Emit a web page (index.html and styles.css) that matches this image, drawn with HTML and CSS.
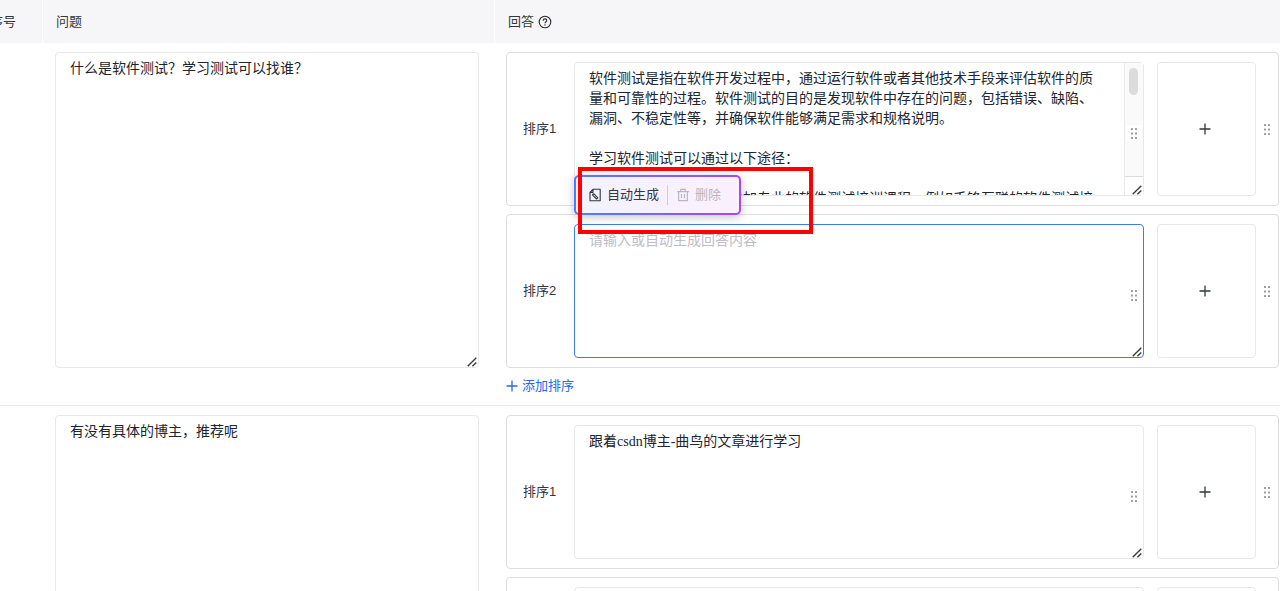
FILE: index.html
```html
<!DOCTYPE html>
<html lang="zh-CN">
<head>
<meta charset="utf-8">
<title>问答标注</title>
<link rel="stylesheet" href="styles.css">
</head>
<body>
<svg class="sprite" aria-hidden="true">
  <symbol id="dots" viewBox="0 0 9 13"><g fill="#999"><rect x="1" y="1" width="2" height="2" rx=".5"/><rect x="5" y="1" width="2" height="2" rx=".5"/><rect x="1" y="5.5" width="2" height="2" rx=".5"/><rect x="5" y="5.5" width="2" height="2" rx=".5"/><rect x="1" y="10" width="2" height="2" rx=".5"/><rect x="5" y="10" width="2" height="2" rx=".5"/></g></symbol>
  <symbol id="grip" viewBox="0 0 10 10"><path d="M.7 9.3 9.3.7M5.4 9.3 9.3 5.4" stroke="#3c3c3c" stroke-width="1.4" fill="none"/></symbol>
  <symbol id="plus" viewBox="0 0 12 12"><path d="M6 .5v11M.5 6h11" stroke="currentColor" stroke-width="1.3" fill="none"/></symbol>
</svg>
<table class="qa">
  <colgroup><col class="col-index"><col class="col-question"><col></colgroup>
  <thead>
    <tr>
      <th><div class="index-title">序号</div></th>
      <th>问题</th>
      <th><div class="answer-title">回答
        <svg class="help" viewBox="0 0 14 14" fill="none" stroke="#25282f" stroke-width="1.1"><circle cx="7" cy="7" r="5.8"/><path d="M5.2 5.7c0-1.1.8-1.8 1.8-1.8s1.8.7 1.8 1.6c0 1.2-1.8 1.4-1.8 2.7M7 9.3v1.2"/></svg></div></th>
    </tr>
  </thead>
  <tbody>
    <tr>
      <td></td>
      <td>
        <div class="field question"><textarea aria-label="问题 1">什么是软件测试？学习测试可以找谁？</textarea><svg class="grip"><use href="#grip"/></svg></div>
      </td>
      <td>
        <div class="answers">
          <div class="answer">
            <label for="a11">排序1</label>
            <div class="field long">
              <textarea id="a11">软件测试是指在软件开发过程中，通过运行软件或者其他技术手段来评估软件的质量和可靠性的过程。软件测试的目的是发现软件中存在的问题，包括错误、缺陷、漏洞、不稳定性等，并确保软件能够满足需求和规格说明。

学习软件测试可以通过以下途径：

1. 培训课程：可以选择参加专业的软件测试培训课程，例如千锋互联的软件测试培</textarea>
              <span class="scrollbar"><span class="thumb"></span></span>
              <span class="drag"><svg class="dots"><use href="#dots"/></svg></span>
              <svg class="grip"><use href="#grip"/></svg>
            </div>
            <button class="add-box" aria-label="添加"><svg class="plus"><use href="#plus"/></svg></button>
            <svg class="dots"><use href="#dots"/></svg>
          </div>
          <div class="answer">
            <label for="a12">排序2</label>
            <div class="field active">
              <textarea id="a12" placeholder="请输入或自动生成回答内容"></textarea>
              <span class="drag"><svg class="dots"><use href="#dots"/></svg></span>
              <svg class="grip"><use href="#grip"/></svg>
              <div class="toolbar">
                <button class="tool"><svg class="tool-icon" viewBox="0 0 14 14" fill="none" stroke="currentColor" stroke-width="1.1" stroke-linejoin="round"><path d="M5 1.3h7.2v11.4H2V4.4zM5 1.3v3.1H2"/><path d="M4.6 6.2 6 5.9l3.8 3.9-1.2 1.2-3.8-3.7z"/></svg>自动生成</button>
                <span class="divider"></span>
                <button class="tool" disabled><svg class="tool-icon" viewBox="0 0 14 14" fill="none" stroke="currentColor" stroke-width="1.2"><path d="M1.2 3.6h11.6M4.7 3.5V1.4h4.6v2.1M2.6 3.6v9h8.8v-9M5.5 6v4.2M8.5 6v4.2"/></svg>删除</button>
              </div>
              <div class="highlight"></div>
            </div>
            <button class="add-box" aria-label="添加"><svg class="plus"><use href="#plus"/></svg></button>
            <svg class="dots"><use href="#dots"/></svg>
          </div>
        </div>
        <button class="add-order"><svg class="plus"><use href="#plus"/></svg>添加排序</button>
      </td>
    </tr>
    <tr>
      <td></td>
      <td>
        <div class="field question"><textarea aria-label="问题 2">有没有具体的博主，推荐呢</textarea><svg class="grip"><use href="#grip"/></svg></div>
      </td>
      <td>
        <div class="answers">
          <div class="answer">
            <label for="a21">排序1</label>
            <div class="field">
              <textarea id="a21">跟着csdn博主-曲鸟的文章进行学习</textarea>
              <span class="drag"><svg class="dots"><use href="#dots"/></svg></span>
              <svg class="grip"><use href="#grip"/></svg>
            </div>
            <button class="add-box" aria-label="添加"><svg class="plus"><use href="#plus"/></svg></button>
            <svg class="dots"><use href="#dots"/></svg>
          </div>
          <div class="answer">
            <span class="label-space"></span>
            <div class="field"><textarea aria-label="回答"></textarea></div>
            <button class="add-box" aria-label="添加"></button>
          </div>
        </div>
      </td>
    </tr>
  </tbody>
</table>
</body>
</html>
```
FILE: styles.css
```css
* {
  box-sizing: border-box;
}

body {
  margin: 0;
  height: 100vh;
  overflow: hidden;
  background: #fff;
  color: #33363d;
  font: 13px/20px "Liberation Sans", "Noto Sans CJK SC", sans-serif;
}

button {
  font: inherit;
  color: inherit;
  background: none;
  border: 0;
  padding: 0;
}

.sprite {
  position: absolute;
  width: 0;
  height: 0;
}

/* Table */
.qa {
  width: 100%;
  table-layout: fixed;
  border-collapse: separate;
  border-spacing: 0;
}

.col-index {
  width: 43px;
}

.col-question {
  width: 452px;
}

th {
  height: 43px;
  padding: 0 13px;
  text-align: left;
  font-weight: 400;
  background: #f6f6f9;
  border-right: 1px solid #fff;
}

th:first-child {
  padding: 0 26px 0 0;
}

th:last-child {
  border-right: 0;
}

.index-title {
  display: flex;
  justify-content: flex-end;
  white-space: nowrap;
}

.answer-title {
  display: flex;
  align-items: center;
  gap: 4px;
}

.help {
  width: 14px;
  height: 14px;
}

td {
  padding: 9px 1px 0 11px;
  vertical-align: top;
  border-bottom: 1px solid #ebebee;
}

td:nth-child(2) {
  padding-left: 12px;
  padding-right: 16px;
}

/* Text fields */
.field {
  position: relative;
  flex: 1;
  height: 134px;
}

.question {
  height: 316px;
}

.field textarea {
  display: block;
  width: 100%;
  height: 100%;
  padding: 6px 14px;
  border: 1px solid #e8e8e8;
  border-radius: 4px;
  outline: 0;
  resize: none;
  overflow: hidden;
  background: #fff;
  color: #20242e;
  font: 14px/20px "Liberation Serif", "Noto Sans CJK SC", serif;
}

.field.long textarea {
  padding-right: 42px;
}

.field.active textarea {
  border-color: #3b7cf0;
}

.field textarea::placeholder {
  color: #bdbdc2;
}

.grip {
  position: absolute;
  right: 2px;
  bottom: 1px;
  width: 10px;
  height: 10px;
}

.scrollbar {
  position: absolute;
  top: 1px;
  right: 1px;
  bottom: 1px;
  width: 19px;
  background: linear-gradient(#fafafa, #fafafa) top / 100% 113px no-repeat #fff;
  border-left: 1px solid #ebebeb;
}

.scrollbar::after {
  content: "";
  position: absolute;
  top: 113px;
  left: 0;
  right: 0;
  border-top: 1px solid #dcdcdc;
}

.thumb {
  display: block;
  width: 9px;
  height: 27px;
  margin: 5px 0 0 4px;
  border-radius: 5px;
  background: #dcdcdc;
}

.drag {
  position: absolute;
  top: 63px;
  right: 2px;
  width: 16px;
  height: 16px;
  display: grid;
  place-items: center;
  background: #fff;
}

.dots {
  width: 9px;
  height: 13px;
}

/* Answer cards */
.answers {
  display: flex;
  flex-direction: column;
  gap: 8px;
}

.answer {
  display: flex;
  align-items: center;
  padding: 9px 6px 9px 16px;
  border: 1px solid #dedede;
  border-radius: 4px;
}

.answer label,
.label-space {
  width: 51px;
}

.add-box {
  display: grid;
  place-items: center;
  align-self: stretch;
  width: 99px;
  margin: 0 7px 0 13px;
  padding-right: 4px;
  border: 1px solid #e8e8e8;
  border-radius: 4px;
}

.label-space ~ .add-box {
  margin-right: 16px;
}

.plus {
  width: 12px;
  height: 12px;
}

.add-order {
  display: flex;
  align-items: center;
  gap: 4px;
  margin: 8px 0 9px;
  color: #2468f2;
}

/* Floating toolbar over the focused answer */
.toolbar {
  position: absolute;
  left: 0;
  bottom: calc(100% + 9px);
  display: flex;
  align-items: center;
  gap: 8px;
  height: 40px;
  padding: 0 18px 0 12px;
  border: 2px solid transparent;
  border-radius: 5px;
  background:
    linear-gradient(100deg, #f2f2ff, #fbf0fc) padding-box,
    linear-gradient(90deg, #4d7dfa, #a549ef) border-box;
  box-shadow: 0 2px 10px rgba(60, 60, 100, 0.3);
}

.tool {
  display: flex;
  align-items: center;
  gap: 5px;
  white-space: nowrap;
}

.tool:disabled {
  color: #b9b6c0;
}

.tool-icon {
  width: 14px;
  height: 14px;
}

.divider {
  width: 1px;
  height: 20px;
  background: #d0cdd8;
}

.highlight {
  position: absolute;
  left: 4px;
  bottom: calc(100% - 10px);
  width: 235px;
  height: 67px;
  border: 4px solid #f00;
  pointer-events: none;
}
```
